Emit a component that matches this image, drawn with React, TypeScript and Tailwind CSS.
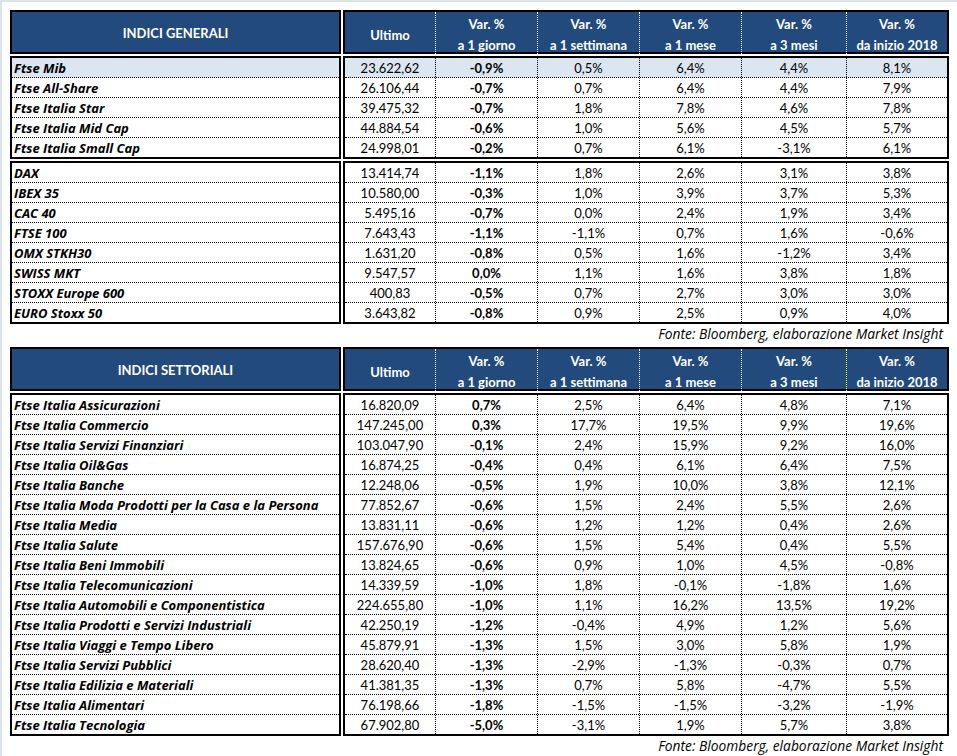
import React from "react";

type Row = [string, string, string, string, string, string, string];

const generali: Row[][] = [
  [
    ["Ftse Mib", "23.622,62", "-0,9%", "0,5%", "6,4%", "4,4%", "8,1%"],
    ["Ftse All-Share", "26.106,44", "-0,7%", "0,7%", "6,4%", "4,4%", "7,9%"],
    ["Ftse Italia Star", "39.475,32", "-0,7%", "1,8%", "7,8%", "4,6%", "7,8%"],
    ["Ftse Italia Mid Cap", "44.884,54", "-0,6%", "1,0%", "5,6%", "4,5%", "5,7%"],
    ["Ftse Italia Small Cap", "24.998,01", "-0,2%", "0,7%", "6,1%", "-3,1%", "6,1%"],
  ],
  [
    ["DAX", "13.414,74", "-1,1%", "1,8%", "2,6%", "3,1%", "3,8%"],
    ["IBEX 35", "10.580,00", "-0,3%", "1,0%", "3,9%", "3,7%", "5,3%"],
    ["CAC 40", "5.495,16", "-0,7%", "0,0%", "2,4%", "1,9%", "3,4%"],
    ["FTSE 100", "7.643,43", "-1,1%", "-1,1%", "0,7%", "1,6%", "-0,6%"],
    ["OMX STKH30", "1.631,20", "-0,8%", "0,5%", "1,6%", "-1,2%", "3,4%"],
    ["SWISS MKT", "9.547,57", "0,0%", "1,1%", "1,6%", "3,8%", "1,8%"],
    ["STOXX Europe 600", "400,83", "-0,5%", "0,7%", "2,7%", "3,0%", "3,0%"],
    ["EURO Stoxx 50", "3.643,82", "-0,8%", "0,9%", "2,5%", "0,9%", "4,0%"],
  ],
];

const settoriali: Row[][] = [
  [
    ["Ftse Italia Assicurazioni", "16.820,09", "0,7%", "2,5%", "6,4%", "4,8%", "7,1%"],
    ["Ftse Italia Commercio", "147.245,00", "0,3%", "17,7%", "19,5%", "9,9%", "19,6%"],
    ["Ftse Italia Servizi Finanziari", "103.047,90", "-0,1%", "2,4%", "15,9%", "9,2%", "16,0%"],
    ["Ftse Italia Oil&Gas", "16.874,25", "-0,4%", "0,4%", "6,1%", "6,4%", "7,5%"],
    ["Ftse Italia Banche", "12.248,06", "-0,5%", "1,9%", "10,0%", "3,8%", "12,1%"],
    ["Ftse Italia Moda Prodotti per la Casa e la Persona", "77.852,67", "-0,6%", "1,5%", "2,4%", "5,5%", "2,6%"],
    ["Ftse Italia Media", "13.831,11", "-0,6%", "1,2%", "1,2%", "0,4%", "2,6%"],
    ["Ftse Italia Salute", "157.676,90", "-0,6%", "1,5%", "5,4%", "0,4%", "5,5%"],
    ["Ftse Italia Beni Immobili", "13.824,65", "-0,6%", "0,9%", "1,0%", "4,5%", "-0,8%"],
    ["Ftse Italia Telecomunicazioni", "14.339,59", "-1,0%", "1,8%", "-0,1%", "-1,8%", "1,6%"],
    ["Ftse Italia Automobili e Componentistica", "224.655,80", "-1,0%", "1,1%", "16,2%", "13,5%", "19,2%"],
    ["Ftse Italia Prodotti e Servizi Industriali", "42.250,19", "-1,2%", "-0,4%", "4,9%", "1,2%", "5,6%"],
    ["Ftse Italia Viaggi e Tempo Libero", "45.879,91", "-1,3%", "1,5%", "3,0%", "5,8%", "1,9%"],
    ["Ftse Italia Servizi Pubblici", "28.620,40", "-1,3%", "-2,9%", "-1,3%", "-0,3%", "0,7%"],
    ["Ftse Italia Edilizia e Materiali", "41.381,35", "-1,3%", "0,7%", "5,8%", "-4,7%", "5,5%"],
    ["Ftse Italia Alimentari", "76.198,66", "-1,8%", "-1,5%", "-1,5%", "-3,2%", "-1,9%"],
    ["Ftse Italia Tecnologia", "67.902,80", "-5,0%", "-3,1%", "1,9%", "5,7%", "3,8%"],
  ],
];

const headers: [string, string][] = [
  ["Var. %", "a 1 giorno"],
  ["Var. %", "a 1 settimana"],
  ["Var. %", "a 1 mese"],
  ["Var. %", "a 3 mesi"],
  ["Var. %", "da inizio 2018"],
];

const gridCols = "grid grid-cols-[91px_102px_102px_102px_105px_100px]";

const Header = ({ title }: { title: string }) => (
  <div className="flex gap-[2px]">
    <div className="flex h-[44px] w-[331px] items-center justify-center border-2 border-black bg-[#234a7c] pt-[2px] font-bold text-white">
      {title}
    </div>
    <div className={`${gridCols} h-[44px] w-[606px] border-2 border-black bg-[#234a7c] font-bold text-white`}>
      <div className="flex items-center justify-center border-r border-dotted border-white pt-[2px]">Ultimo</div>
      {headers.map(([a, b], i) => (
        <div
          key={b}
          className={`flex flex-col items-center justify-center pt-[2px] leading-[21px] ${i < headers.length - 1 ? "border-r border-dotted border-white" : ""}`}
        >
          <span>{a}</span>
          <span>{b}</span>
        </div>
      ))}
    </div>
  </div>
);

const Group = ({ rows, highlightFirst }: { rows: Row[]; highlightFirst?: boolean }) => (
  <div className="flex gap-[2px]">
    <div className="w-[331px] border-2 border-black font-['Open_Sans',sans-serif] text-[13px] font-bold italic">
      {rows.map((r, i) => (
        <div
          key={r[0]}
          className={`flex items-center pl-[2px] pt-[1px] ${i < rows.length - 1 ? "h-[20px] border-b border-dotted border-black" : "h-[19px]"} ${highlightFirst && i === 0 ? "bg-[#dce6f1]" : ""}`}
        >
          {r[0]}
        </div>
      ))}
    </div>
    <div className="w-[606px] border-2 border-black">
      {rows.map((r, i) => (
        <div
          key={r[0]}
          className={`${gridCols} ${i < rows.length - 1 ? "h-[20px] border-b border-dotted border-black" : "h-[19px]"} ${highlightFirst && i === 0 ? "bg-[#dce6f1]" : ""}`}
        >
          {r.slice(1).map((v, j) => (
            <div
              key={j}
              className={`flex items-center justify-center pt-[1px] ${j === 1 ? "font-bold" : ""} ${j < 5 ? "border-r border-dotted border-black" : ""}`}
            >
              {v}
            </div>
          ))}
        </div>
      ))}
    </div>
  </div>
);

const Source = () => (
  <div className="h-[23px] w-[937px] pr-[4px] pt-[1px] text-right font-['Open_Sans',sans-serif] text-[13.8px] italic leading-[18px]">
    Fonte: Bloomberg, elaborazione Market Insight
  </div>
);

export default function App() {
  return (
    <div
      className="min-h-screen border-l-2 border-t-2 border-[#dbe2ec] bg-white pl-2 pt-2 text-[13px] leading-none text-black"
      style={{ fontFamily: "Lato, 'Open Sans', sans-serif" }}
    >
      <div className="flex flex-col gap-[2px]">
        <Header title="INDICI GENERALI" />
        {generali.map((g, i) => (
          <Group key={i} rows={g} highlightFirst={i === 0} />
        ))}
      </div>
      <Source />
      <div className="flex flex-col gap-[2px]">
        <Header title="INDICI SETTORIALI" />
        {settoriali.map((g, i) => (
          <Group key={i} rows={g} />
        ))}
      </div>
      <Source />
    </div>
  );
}
